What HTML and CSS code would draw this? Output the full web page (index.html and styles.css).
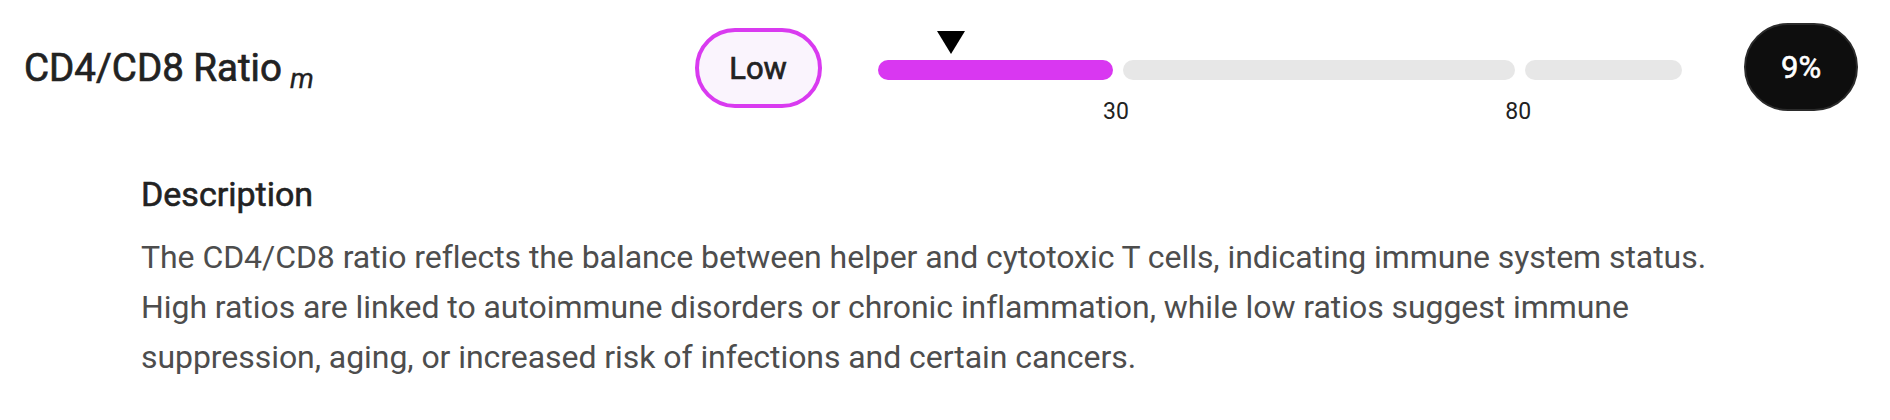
FILE: index.html
```html
<!DOCTYPE html>
<html lang="en">
<head>
<meta charset="utf-8">
<title>CD4/CD8 Ratio</title>
<link rel="stylesheet" href="styles.css">
</head>
<body>
<section class="card">
  <div class="row">
    <h2 class="title">CD4/CD8 Ratio<sub class="unit">m</sub></h2>
    <div class="status">Low</div>
    <div class="range">
      <div class="pointer" style="left: 9%"></div>
      <div class="seg seg-low" style="flex-grow: 30"><span class="tick">30</span></div>
      <div class="seg" style="flex-grow: 50"><span class="tick">80</span></div>
      <div class="seg" style="flex-grow: 20"></div>
    </div>
    <div class="badge">9%</div>
  </div>
  <div class="desc">
    <h3 class="desc-title">Description</h3>
    <p class="desc-text">The CD4/CD8 ratio reflects the balance between helper and cytotoxic T cells, indicating immune system status. High ratios are linked to autoimmune disorders or chronic inflammation, while low ratios suggest immune suppression, aging, or increased risk of infections and certain cancers.</p>
  </div>
</section>
</body>
</html>
```

FILE: styles.css
```css
html, body {
  margin: 0;
  padding: 0;
  background: #ffffff;
}

body {
  font-family: Roboto, "Noto Sans", "Liberation Sans", sans-serif;
  color: #222222;
}

.card {
  padding: 23px 32px 0 24px;
}

.row {
  display: flex;
  align-items: center;
  height: 88px;
}

.title {
  width: 671px;
  margin: 0;
  font-size: 38.5px;
  font-weight: 400;
  -webkit-text-stroke: 0.7px #222222;
  color: #222222;
  white-space: nowrap;
}

.unit {
  font-size: 28px;
  font-style: italic;
  font-weight: 400;
  -webkit-text-stroke: 0.3px #222222;
  margin-left: 8px;
  vertical-align: -7px;
  line-height: 0;
}

.status {
  box-sizing: border-box;
  width: 127px;
  height: 80px;
  margin-top: 2px;
  border: 4px solid #d93af0;
  border-radius: 40px;
  background: #faf4fd;
  display: flex;
  align-items: center;
  justify-content: center;
  font-size: 31px;
  font-weight: 400;
  -webkit-text-stroke: 0.7px #222222;
  color: #222222;
}

.range {
  position: relative;
  width: 805px;
  margin-left: 56px;
  margin-top: 6px;
  display: flex;
  gap: 10px;
}

.seg {
  position: relative;
  flex-basis: 0;
  height: 20px;
  border-radius: 10px;
  background: #e7e7e7;
}

.seg-low {
  background: #d937f1;
}

.tick {
  position: absolute;
  left: 100%;
  top: 38px;
  transform: translateX(-50%);
  margin-left: 3px;
  font-size: 23px;
  line-height: 27px;
  color: #222222;
}

.pointer {
  position: absolute;
  top: -29px;
  width: 0;
  height: 0;
  margin-left: 1px;
  transform: translateX(-50%);
  border-left: 14.5px solid transparent;
  border-right: 14.5px solid transparent;
  border-top: 23px solid #000000;
}

.badge {
  box-sizing: border-box;
  width: 114px;
  height: 88px;
  margin-left: 62px;
  border: 2px solid #2b2b2b;
  border-radius: 44px;
  background: #0e0e0e;
  color: #ffffff;
  display: flex;
  align-items: center;
  justify-content: center;
  font-size: 31px;
  font-weight: 400;
  -webkit-text-stroke: 0.6px #ffffff;
}

.desc {
  padding-left: 117px;
  margin-top: 63px;
}

.desc-title {
  margin: 0;
  font-size: 34px;
  line-height: 40px;
  font-weight: 400;
  -webkit-text-stroke: 0.6px #222222;
  color: #222222;
}

.desc-text {
  margin: 18px 0 0 0;
  max-width: 1600px;
  font-size: 32px;
  letter-spacing: -0.06px;
  line-height: 50px;
  font-weight: 400;
  color: #4d4d4d;
}
```
